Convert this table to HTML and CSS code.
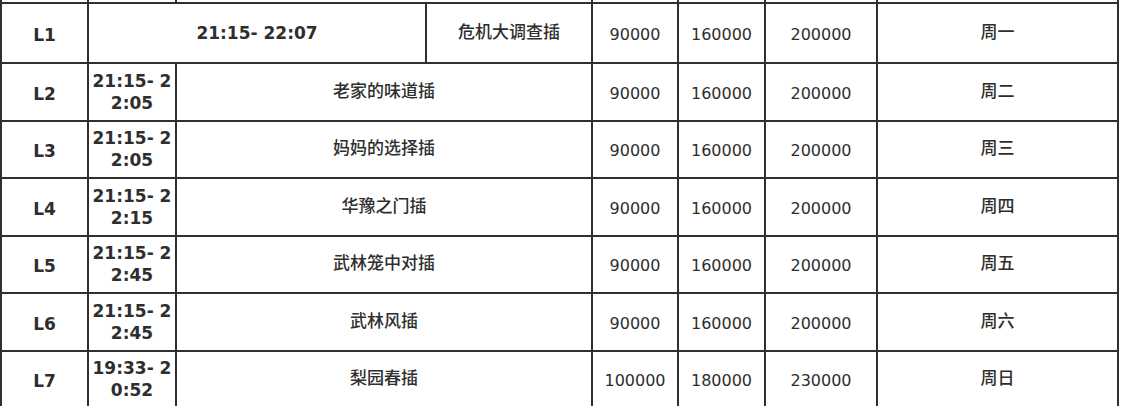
FILE: index.html
```html
<!DOCTYPE html>
<html lang="zh">
<head>
<meta charset="utf-8">
<title>节目时段</title>
<link rel="stylesheet" href="styles.css">
</head>
<body>
<table class="grid">
  <colgroup>
    <col class="c-id"><col class="c-time"><col class="c-prog"><col class="c-prog2">
    <col class="c-n1"><col class="c-n2"><col class="c-n3"><col class="c-day">
  </colgroup>
  <tbody>
    <tr class="prev">
      <td></td><td></td><td colspan="2"></td><td></td><td></td><td></td><td></td>
    </tr>
    <tr class="first">
      <td class="id">L1</td>
      <td class="time" colspan="2">21:15- 22:07</td>
      <td class="zh">危机大调查插</td>
      <td class="num">90000</td><td class="num">160000</td><td class="num">200000</td>
      <td class="zh">周一</td>
    </tr>
    <tr>
      <td class="id">L2</td>
      <td class="time">21:15- 22:05</td>
      <td class="zh" colspan="2">老家的味道插</td>
      <td class="num">90000</td><td class="num">160000</td><td class="num">200000</td>
      <td class="zh">周二</td>
    </tr>
    <tr>
      <td class="id">L3</td>
      <td class="time">21:15- 22:05</td>
      <td class="zh" colspan="2">妈妈的选择插</td>
      <td class="num">90000</td><td class="num">160000</td><td class="num">200000</td>
      <td class="zh">周三</td>
    </tr>
    <tr>
      <td class="id">L4</td>
      <td class="time">21:15- 22:15</td>
      <td class="zh" colspan="2">华豫之门插</td>
      <td class="num">90000</td><td class="num">160000</td><td class="num">200000</td>
      <td class="zh">周四</td>
    </tr>
    <tr>
      <td class="id">L5</td>
      <td class="time">21:15- 22:45</td>
      <td class="zh" colspan="2">武林笼中对插</td>
      <td class="num">90000</td><td class="num">160000</td><td class="num">200000</td>
      <td class="zh">周五</td>
    </tr>
    <tr>
      <td class="id">L6</td>
      <td class="time">21:15- 22:45</td>
      <td class="zh" colspan="2">武林风插</td>
      <td class="num">90000</td><td class="num">160000</td><td class="num">200000</td>
      <td class="zh">周六</td>
    </tr>
    <tr>
      <td class="id">L7</td>
      <td class="time">19:33- 20:52</td>
      <td class="zh" colspan="2">梨园春插</td>
      <td class="num">100000</td><td class="num">180000</td><td class="num">230000</td>
      <td class="zh">周日</td>
    </tr>
  </tbody>
</table>
</body>
</html>
```

FILE: styles.css
```css
html, body {
  margin: 0;
  padding: 0;
  background: #ffffff;
}

body {
  overflow: hidden;
  color: #2e2e2e;
  font-family: "DejaVu Sans", Verdana, "Noto Sans CJK SC", sans-serif;
}

.grid {
  border-collapse: collapse;
  table-layout: fixed;
  width: 1119px;
  margin-top: -18px;
}

.c-id { width: 87px; }
.c-time { width: 88px; }
.c-prog { width: 250px; }
.c-prog2 { width: 166px; }
.c-n1 { width: 86px; }
.c-n2 { width: 87px; }
.c-n3 { width: 112px; }
.c-day { width: 241px; }

.grid td {
  border: 2px solid #2f2f2f;
  padding: 0 2px;
  text-align: center;
  vertical-align: middle;
  height: 55.5px;
  font-size: 16px;
}

.grid tr.prev td {
  height: 18px;
}

.grid tr.first td {
  height: 58px;
}

.grid td.id {
  font-weight: bold;
  font-size: 17px;
  padding-top: 4px;
  height: 51.5px;
}

.grid tr.first td.id {
  height: 54px;
}

.grid td.time {
  font-weight: bold;
  font-size: 17px;
  line-height: 22px;
  word-break: break-all;
}

.grid td.zh {
  font-family: "Noto Sans CJK SC", "DejaVu Sans", sans-serif;
  font-size: 17px;
  font-weight: 500;
  padding-bottom: 5px;
  height: 50.5px;
}

.grid tr.first td.zh {
  height: 53px;
}

.grid td.num {
  font-size: 16px;
  padding-top: 3px;
  height: 52.5px;
}

.grid tr.first td.num {
  height: 55px;
}
```
